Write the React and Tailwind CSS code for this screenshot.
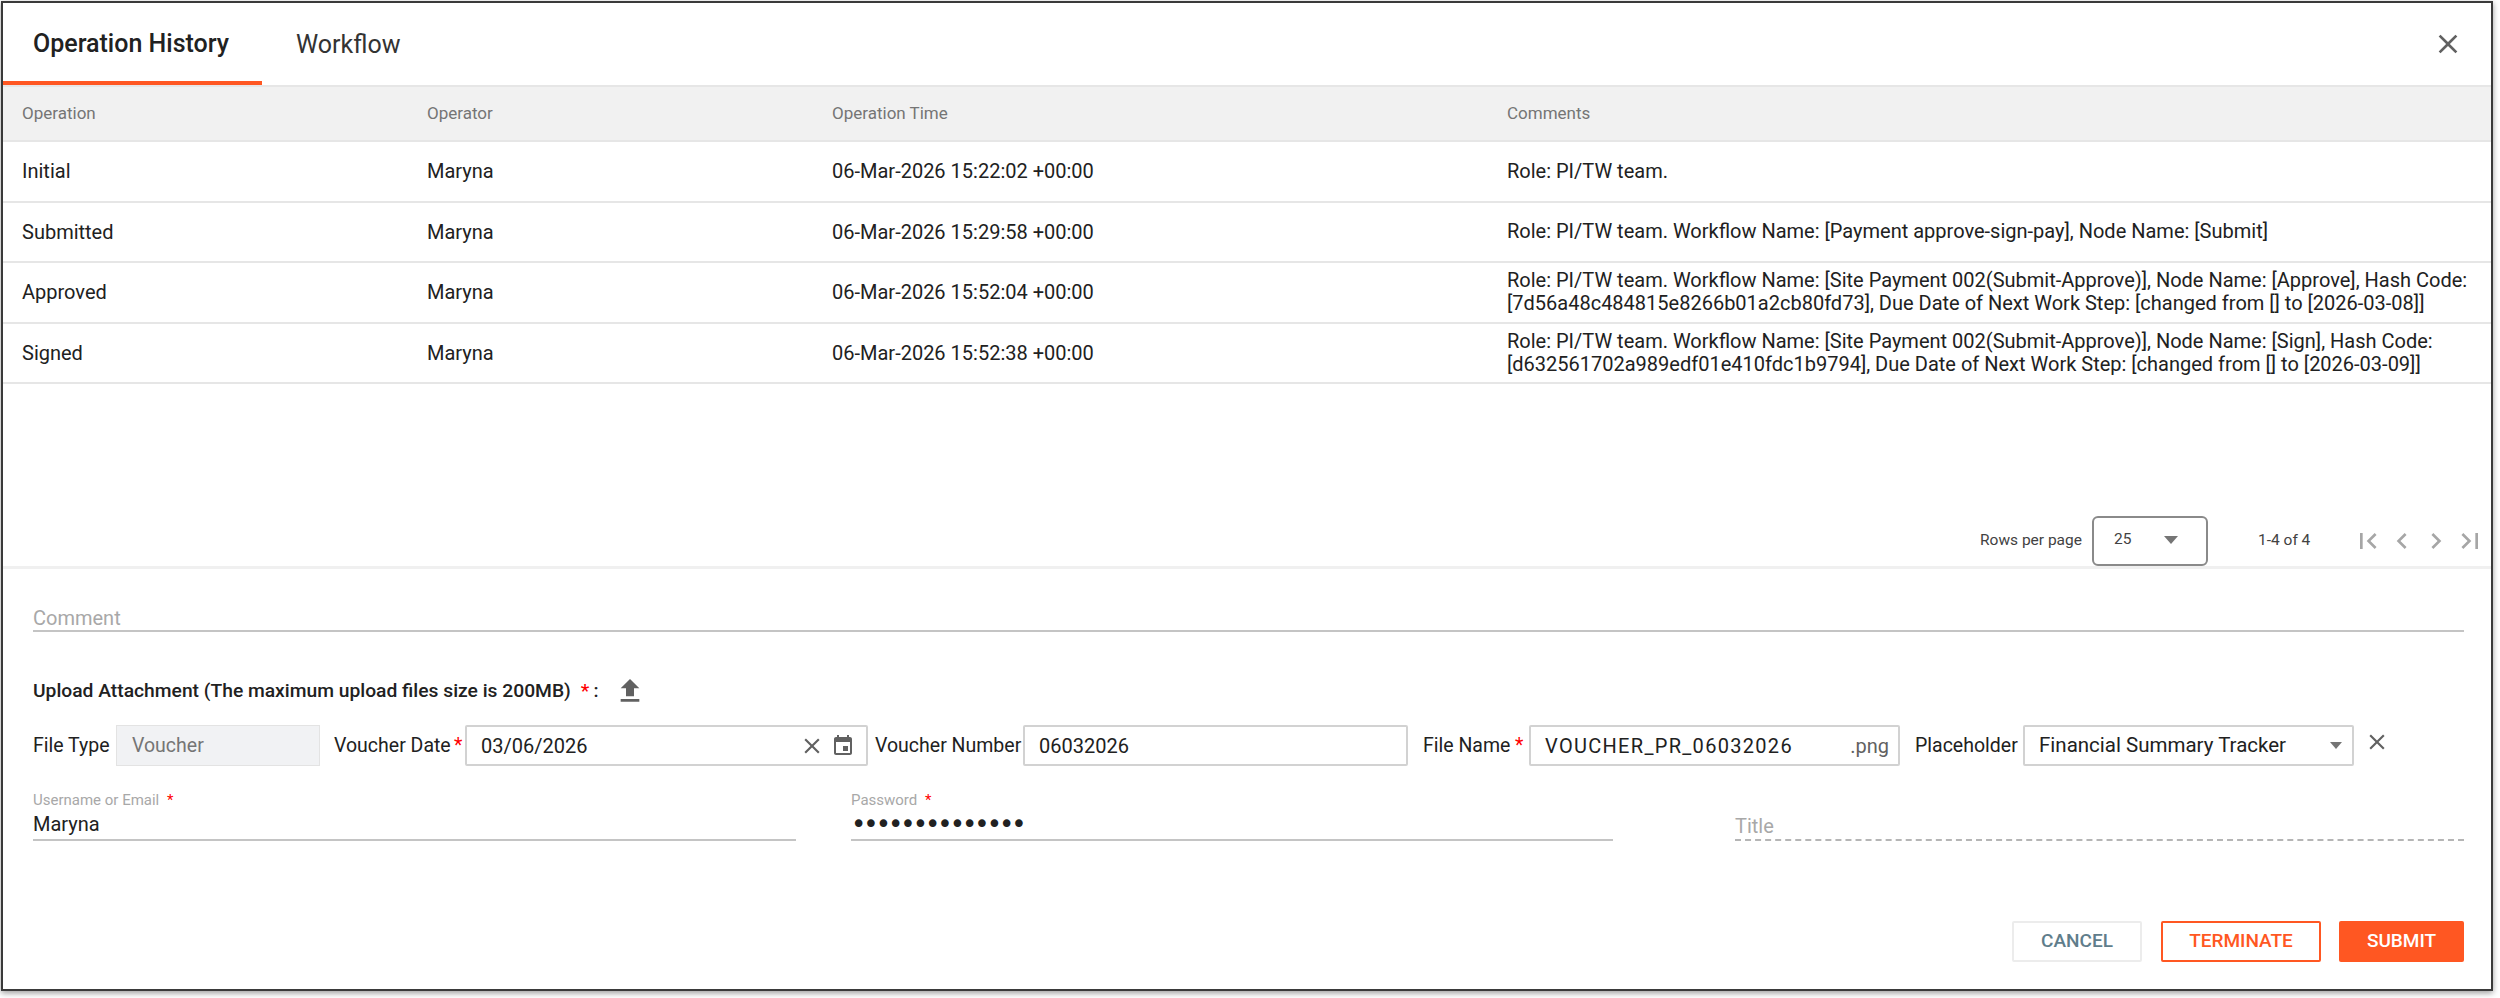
import React from 'react';

const rows = [
  { op: 'Initial', time: '06-Mar-2026 15:22:02 +00:00', comment: ['Role: PI/TW team.'] },
  { op: 'Submitted', time: '06-Mar-2026 15:29:58 +00:00', comment: ['Role: PI/TW team. Workflow Name: [Payment approve-sign-pay], Node Name: [Submit]'] },
  {
    op: 'Approved',
    time: '06-Mar-2026 15:52:04 +00:00',
    comment: [
      'Role: PI/TW team. Workflow Name: [Site Payment 002(Submit-Approve)], Node Name: [Approve], Hash Code:',
      '[7d56a48c484815e8266b01a2cb80fd73], Due Date of Next Work Step: [changed from [] to [2026-03-08]]',
    ],
  },
  {
    op: 'Signed',
    time: '06-Mar-2026 15:52:38 +00:00',
    comment: [
      'Role: PI/TW team. Workflow Name: [Site Payment 002(Submit-Approve)], Node Name: [Sign], Hash Code:',
      '[d632561702a989edf01e410fdc1b9794], Due Date of Next Work Step: [changed from [] to [2026-03-09]]',
    ],
  },
];

function Icon({ d, className }) {
  return (
    <svg viewBox="0 0 24 24" className={className} fill="currentColor">
      <path d={d} />
    </svg>
  );
}

const closePath = 'M19 6.41L17.59 5 12 10.59 6.41 5 5 6.41 10.59 12 5 17.59 6.41 19 12 13.41 17.59 19 19 17.59 13.41 12z';

const Star = ({ className = '' }) => <span className={`text-[#f00] ${className}`}>*</span>;

export default function App() {
  return (
    <div className="w-[2500px] h-[998px] bg-white overflow-hidden pt-px pl-px font-['Roboto',sans-serif] text-[#212121]">
      <div className="w-[2492px] h-[990px] border-2 border-[#3a3a3a] shadow-[0_2px_6px_rgba(0,0,0,0.4)] bg-white flex flex-col">
        {/* tabs */}
        <div className="h-[82px] shrink-0 flex items-stretch relative">
          <div className="w-[259px] border-b-4 border-[#ff5722] flex items-center pl-[30px] pt-[3px] text-[25px] font-medium">Operation History</div>
          <div className="flex items-center ml-[34px] pt-[2px] text-[25px] text-[#333]">Workflow</div>
          <button className="absolute right-[27px] top-[25px] text-[#616161]">
            <Icon d={closePath} className="w-[32px] h-[32px]" />
          </button>
        </div>

        {/* table */}
        <div className="h-[484px] shrink-0 flex flex-col justify-between border-b-[3px] border-[#f0f0f0]">
          <div>
            <div className="grid grid-cols-[405px_405px_675px_1fr] h-[57px] items-center bg-[#f1f1f1] border-y-2 border-[#e6e6e6] text-[17px] text-[#757575] pl-[19px]">
              <div>Operation</div>
              <div>Operator</div>
              <div>Operation Time</div>
              <div>Comments</div>
            </div>
            {rows.map((r) => (
              <div key={r.op} className="grid grid-cols-[405px_405px_675px_1fr] h-[60.5px] items-center border-b-2 border-[#e6e6e6] text-[20px] pl-[19px]">
                <div>{r.op}</div>
                <div>Maryna</div>
                <div>{r.time}</div>
                <div className="leading-[23px]">
                  {r.comment.map((line) => (
                    <div key={line} className="whitespace-nowrap">{line}</div>
                  ))}
                </div>
              </div>
            ))}
          </div>
          <div className="h-[50px] flex items-center text-[15.5px] text-[#424242]">
            <span className="ml-[1977px] w-[112px]">Rows per page</span>
            <div className="w-[116px] h-[50px] border-2 border-[#8a8a8a] rounded-[6px] flex items-center justify-between pl-[20px] pr-[28px] pb-[2px]">
              <span>25</span>
              <span className="w-0 h-0 border-x-[7px] border-x-transparent border-t-[8px] border-t-[#757575]" />
            </div>
            <span className="ml-[50px] w-[92px]">1-4 of 4</span>
            <div className="flex items-center text-[#a6a6a6] ml-[2px] gap-[2px]">
              <Icon d="M18.41 16.59L13.82 12l4.59-4.59L17 6l-6 6 6 6zM6 6h2v12H6z" className="w-[32px] h-[32px]" />
              <Icon d="M15.41 7.41L14 6l-6 6 6 6 1.41-1.41L10.83 12z" className="w-[32px] h-[32px]" />
              <Icon d="M10 6L8.59 7.41 13.17 12l-4.58 4.59L10 18l6-6z" className="w-[32px] h-[32px]" />
              <Icon d="M5.59 7.41L10.18 12l-4.59 4.59L7 18l6-6-6-6zM16 6h2v12h-2z" className="w-[32px] h-[32px]" />
            </div>
          </div>
        </div>

        {/* form */}
        <div className="pl-[30px] pr-[27px] flex flex-col">
          <div className="mt-[38px] h-[25px] border-b-2 border-[#c4c4c4] text-[20px] leading-[22px] text-[#a8a8a8]">Comment</div>

          <div className="mt-[41px] h-[36px] flex items-center text-[19.25px] font-medium">
            <span>Upload Attachment (The maximum upload files size is 200MB)</span>
            <Star className="ml-[10px]" />
            <span className="ml-[4px]">:</span>
            <Icon d="M9 16h6v-6h4l-7-7-7 7h4zm-4 2h14v2H5z" className="w-[32px] h-[32px] ml-[16px] text-[#616161]" />
          </div>

          <div className="mt-[16px] h-[41px] flex items-center text-[19.5px]">
            <span className="w-[83px] whitespace-nowrap">File Type</span>
            <div className="w-[204px] h-full flex items-center pl-[15px] bg-[#f1f2f4] border border-[#e3e3e3] text-[#757575]">Voucher</div>
            <span className="ml-[14px] w-[120px] whitespace-nowrap">Voucher Date</span>
            <Star className="w-[11px]" />
            <div className="w-[403px] h-full flex items-center justify-between pl-[14px] pr-[11px] border-2 border-[#d2d2d2] rounded-[2px] text-[20px]">
              <span>03/06/2026</span>
              <span className="flex items-center gap-[6px] text-[#616161]">
                <Icon d={closePath} className="w-[26px] h-[26px]" />
                <Icon d="M17 12h-5v5h5v-5zM16 1v2H8V1H6v2H5c-1.11 0-1.99.9-1.99 2L3 19c0 1.1.89 2 2 2h14c1.1 0 2-.9 2-2V5c0-1.1-.9-2-2-2h-1V1h-2zm3 18H5V8h14v11z" className="w-[24px] h-[24px]" />
              </span>
            </div>
            <span className="ml-[7px] w-[148px] whitespace-nowrap">Voucher Number</span>
            <div className="w-[385px] h-full flex items-center pl-[14px] border-2 border-[#d2d2d2] rounded-[2px] text-[20px]">06032026</div>
            <span className="ml-[15px] w-[92px] whitespace-nowrap">File Name</span>
            <Star className="w-[14px]" />
            <div className="w-[371px] h-full flex items-center justify-between pl-[14px] pr-[9px] border-2 border-[#d2d2d2] rounded-[2px] text-[20px]">
              <span className="tracking-[1.3px]">VOUCHER_PR_06032026</span>
              <span className="text-[#616161]">.png</span>
            </div>
            <span className="ml-[15px] w-[108px] whitespace-nowrap">Placeholder</span>
            <div className="w-[331px] h-full flex items-center justify-between pl-[14px] pr-[10px] border-2 border-[#d2d2d2] rounded-[2px] text-[20.5px]">
              <span>Financial Summary Tracker</span>
              <span className="w-0 h-0 border-x-[6px] border-x-transparent border-t-[7px] border-t-[#757575]" />
            </div>
            <Icon d={closePath} className="w-[26px] h-[26px] ml-[10px] -mt-[8px] text-[#616161]" />
          </div>

          <div className="mt-[25px] flex items-end">
            <div className="w-[763px] border-b-2 border-[#c4c4c4]">
              <div className="h-[18px] text-[15px] leading-[18px] text-[#a8a8a8]">Username or Email <Star className="ml-[4px]" /></div>
              <div className="h-[30px] text-[20px] leading-[30px]">Maryna</div>
            </div>
            <div className="ml-[55px] w-[762px] border-b-2 border-[#c4c4c4]">
              <div className="h-[18px] text-[15px] leading-[18px] text-[#a8a8a8]">Password <Star className="ml-[4px]" /></div>
              <input
                type="password"
                readOnly
                value="Maryna12345678"
                className="block w-full h-[30px] outline-none text-[26px] tracking-[-3px] text-[#212121] font-['DejaVu_Sans',sans-serif]"
              />
            </div>
            <div className="ml-[122px] w-[729px] border-b-2 border-dashed border-[#b5b5b5] h-[30px] text-[20px] leading-[30px] text-[#a8a8a8]">Title</div>
          </div>

          <div className="mt-[80px] flex justify-end text-[19px] font-medium">
            <button className="w-[130px] h-[41px] border-2 border-[#ececec] rounded-[2px] text-[#607d8b]">CANCEL</button>
            <button className="ml-[19px] w-[160px] h-[41px] border-2 border-[#ff5722] rounded-[2px] text-[#ff5722]">TERMINATE</button>
            <button className="ml-[18px] w-[125px] h-[41px] bg-[#ff5722] rounded-[2px] text-white">SUBMIT</button>
          </div>
        </div>
      </div>
    </div>
  );
}
